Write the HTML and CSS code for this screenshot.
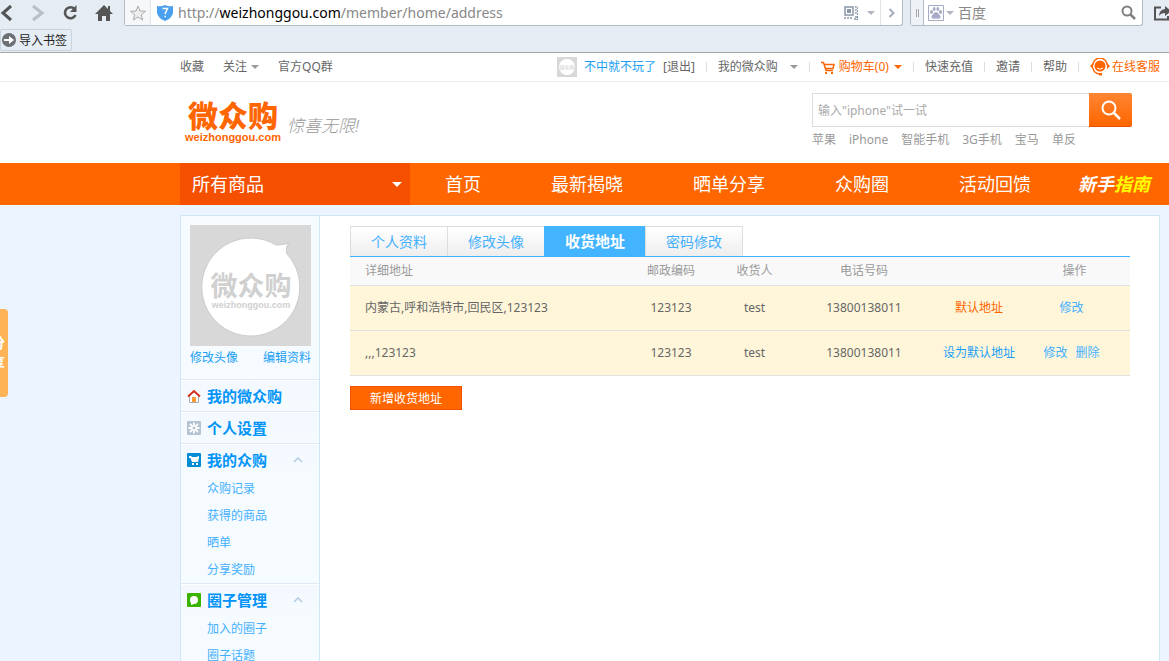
FILE: index.html
```html
<!DOCTYPE html>
<html lang="zh-CN">
<head>
    <meta charset="UTF-8">
    <meta name="viewport" content="width=device-width, initial-scale=1.0">
    <title>收货地址 - 微众购</title>
    <link rel="stylesheet" href="styles.css">
</head>
<body>
    <!-- Browser bar -->
    <div class="browser">
        <div class="browser-row">
            <div class="browser-buttons">
                <button aria-label="后退"><svg width="14" height="18" viewBox="0 0 14 18"><path d="M11 2L3 9l8 7" fill="none" stroke="#555" stroke-width="3"/></svg></button>
                <button aria-label="前进"><svg width="14" height="18" viewBox="0 0 14 18"><path d="M2 2l9 7-9 7" fill="none" stroke="#b9bfc6" stroke-width="3"/></svg></button>
                <button aria-label="刷新"><svg width="16" height="18" viewBox="0 0 16 18"><path d="M12.500 5A5.500 5.500 0 1 0 13.500 11" fill="none" stroke="#555" stroke-width="2.600"/><path d="M14.500 1v7H8z" fill="#555"/></svg></button>
                <button aria-label="主页"><svg width="18" height="18" viewBox="0 0 18 18"><path d="M9 1L0 10h3v7h4v-5h4v5h4v-7h3l-3-3V2h-2v3z" fill="#555"/></svg></button>
            </div>
            <div class="address">
                <button class="star" aria-label="收藏"><svg width="16" height="16" viewBox="0 0 16 16"><path d="M8 1l2 5 5.500.300-4.200 3.500 1.400 5.200L8 12l-4.700 3 1.400-5.200L.5 6.300 6 6z" fill="#eee" stroke="#aaa"/></svg></button>
                <svg class="shield" width="16" height="16" viewBox="0 0 16 16"><path d="M0 1q4 1 8-1 4 2 8 1v7q-1 5-8 8-7-3-8-8z" fill="#4a9fee"/><path d="M5.500 3.500h5l-2.500 5.500M7.500 11.500h1.500" fill="none" stroke="#fff" stroke-width="1.500"/></svg>
                <div class="url">http://<b>weizhonggou.com</b>/member/home/address</div>
                <svg class="qr" width="14" height="14" viewBox="0 0 14 14"><path d="M1 1h8v8H1z" fill="none" stroke="#8b98a8" stroke-width="1.500"/><path d="M3 3h4v4H3z" fill="#8b98a8"/><path d="M12 0v9M0 12h9M13.500 1v13M11 11h3v3h-3z" fill="none" stroke="#8b98a8" stroke-width="1.500" stroke-dasharray="2 1"/></svg>
                <span class="caret caret-browser"></span>
                <button class="go" aria-label="转到"><svg width="8" height="10" viewBox="0 0 8 10"><path d="M1.500 1l4 4-4 4" fill="none" stroke="#a4abbd" stroke-width="2"/></svg></button>
            </div>
            <div class="engine">
                <span class="grip"></span>
                <svg width="16" height="16" viewBox="0 0 16 16"><path d="M.5.5h15v15H.5z" fill="none" stroke="#a6abc8"/><g fill="#a6abc8"><ellipse cx="3.500" cy="7" rx="1.500" ry="2"/><ellipse cx="6.200" cy="4" rx="1.400" ry="2"/><ellipse cx="9.800" cy="4" rx="1.400" ry="2"/><ellipse cx="12.500" cy="7" rx="1.500" ry="2"/><path d="M8 7q2 0 3 2.500 2 1 1.500 3-1 2-4.500 1-3.500 1-4.500-1-.5-2 1.500-3Q6 7 8 7z"/></g></svg>
                <span class="caret caret-browser"></span>
                <input type="text" placeholder="百度" aria-label="百度搜索">
                <svg width="15" height="15" viewBox="0 0 15 15"><circle cx="6" cy="6" r="4.500" fill="none" stroke="#808080" stroke-width="2"/><path d="M9 9l5 5" stroke="#808080" stroke-width="2.500"/></svg>
            </div>
            <button class="share-page" aria-label="分享页面"><svg width="17" height="16" viewBox="0 0 17 16"><path d="M7 2.500H1v12h13V11" fill="none" stroke="#555" stroke-width="2"/><path d="M5 11q0-6 6-7V1l6 5-6 5V8q-4 0-6 3z" fill="#555"/></svg></button>
        </div>
        <button class="bookmark">
            <svg width="14" height="14" viewBox="0 0 14 14"><circle cx="7" cy="7" r="7" fill="#6c7075"/><path d="M2 6h5V3l5 4-5 4V8H2z" fill="#fff"/></svg>
            导入书签
        </button>
    </div>

    <!-- Top links -->
    <div class="topbar">
        <div class="wrap topbar-inner">
            <div class="top-left">
                <a href="#">收藏</a>
                <a href="#">关注<span class="caret"></span></a>
                <a href="#">官方QQ群</a>
            </div>
            <div class="top-right">
                <div class="user">
                    <span class="mini-avatar"><i>微众购</i></span>
                    <a class="blue" href="#">不中就不玩了</a>
                    <a href="#">[退出]</a>
                </div>
                <a class="top-item mine" href="#">我的微众购<span class="caret"></span></a>
                <a class="top-item cart" href="#"><svg width="14" height="13" viewBox="0 0 14 13"><path d="M0 1.500h2.500L5 9.500h7M3 3.500h10L12 7.500H4" fill="none" stroke="#f60" stroke-width="1.500"/><path d="M4 11h2v2H4zM10 11h2v2h-2z" fill="#f60"/></svg>购物车(0)<span class="caret"></span></a>
                <a class="top-item" href="#">快速充值</a>
                <a class="top-item" href="#">邀请</a>
                <a class="top-item" href="#">帮助</a>
                <a class="top-item service" href="#"><svg width="20" height="18" viewBox="0 0 20 18"><circle cx="10" cy="8" r="5.500" fill="#f60"/><path d="M3 7a7 7 0 0 1 14 0M3 10a7.500 6.500 0 0 0 7 6" fill="none" stroke="#f60" stroke-width="1.500"/><path d="M3 5v6L0 8zM17 5v6l3-3z" fill="#f60"/><path d="M9 15h3v2.500H9z" fill="#f60"/><path d="M7 10q3 2.500 6 0" fill="none" stroke="#fff"/></svg>在线客服</a>
            </div>
        </div>
    </div>

    <!-- Logo and search -->
    <div class="header">
        <div class="wrap header-inner">
            <a class="logo" href="#">
                <span class="logo-name">微众购</span>
                <span class="logo-domain">weizhonggou.com</span>
            </a>
            <span class="slogan">惊喜无限!</span>
            <div class="search">
                <form class="search-form">
                    <input type="text" placeholder='输入"iphone"试一试' aria-label="搜索商品">
                    <button type="button" aria-label="搜索"><svg width="22" height="22" viewBox="0 0 22 22"><circle cx="9" cy="9" r="6.500" fill="none" stroke="#fff" stroke-width="2"/><path d="M14 14l6 6" stroke="#fff" stroke-width="2.500"/></svg></button>
                </form>
                <div class="hot-words">
                    <a href="#">苹果</a>
                    <a href="#">iPhone</a>
                    <a href="#">智能手机</a>
                    <a href="#">3G手机</a>
                    <a href="#">宝马</a>
                    <a href="#">单反</a>
                </div>
            </div>
        </div>
    </div>

    <!-- Navigation -->
    <div class="nav">
        <div class="wrap nav-inner">
            <a class="all-goods" href="#">所有商品<span class="caret caret-white"></span></a>
            <a class="nav-link" href="#">首页</a>
            <a class="nav-link" href="#">最新揭晓</a>
            <a class="nav-link" href="#">晒单分享</a>
            <a class="nav-link" href="#">众购圈</a>
            <a class="nav-link" href="#">活动回馈</a>
            <a class="guide" href="#">新手<span>指南</span></a>
        </div>
    </div>

    <div class="wrap member">
        <!-- Sidebar -->
        <div class="sidebar">
            <div class="profile">
                <svg class="avatar" viewBox="0 0 121 121"><path d="M0 0h121v121H0z" fill="#d8d8d8"/><path d="M86 20q8 0 13-2-4 4-2 11a49 49 0 1 1-11-9z" fill="#fff" stroke="#ccc"/><text class="avatar-name" x="61" y="71" text-anchor="middle">微众购</text><text class="avatar-domain" x="61" y="83" text-anchor="middle">weizhonggou.com</text></svg>
                <div class="profile-links">
                    <a href="#">修改头像</a>
                    <a href="#">编辑资料</a>
                </div>
            </div>
            <div class="menu-group">
                <a class="menu-title" href="#"><svg width="14" height="14" viewBox="0 0 14 14"><path d="M2.500 7v6.500h9V7L7 3z" fill="#fff" stroke="#aaa"/><path d="M1 7.500L7 2l6 5.500" fill="none" stroke="#d9301a" stroke-width="1.800"/><path d="M5 8h4v5H5z" fill="#f93"/></svg>我的微众购</a>
            </div>
            <div class="menu-group">
                <a class="menu-title" href="#"><svg width="14" height="14" viewBox="0 0 14 14"><rect width="14" height="14" rx="1" fill="#b4c3d1"/><path d="M7 1.500v11M1.500 7h11M3 3l8 8M11 3l-8 8" stroke="#fff" stroke-width="1.800"/><circle cx="7" cy="7" r="1.500" fill="#b4c3d1"/></svg>个人设置</a>
            </div>
            <div class="menu-group">
                <a class="menu-title" href="#"><svg width="14" height="14" viewBox="0 0 14 14"><rect width="14" height="14" rx="1" fill="#008cd6"/><path d="M2 3h2l1 1h4l3-1v2l-1 4H5L3.500 5H2zM5 10h2v2H5zM9 10h2v2H9z" fill="#fff"/></svg>我的众购<svg class="fold" width="10" height="6" viewBox="0 0 10 6"><path d="M1 5l4-4 4 4" fill="none" stroke="#b5cbe0" stroke-width="1.500"/></svg></a>
                <a class="menu-item" href="#">众购记录</a>
                <a class="menu-item" href="#">获得的商品</a>
                <a class="menu-item" href="#">晒单</a>
                <a class="menu-item" href="#">分享奖励</a>
            </div>
            <div class="menu-group">
                <a class="menu-title" href="#"><svg width="14" height="14" viewBox="0 0 14 14"><rect width="14" height="14" rx="1" fill="#3bb300"/><path d="M7 3q4 0 4 4t-4 4l-3 1v-2Q3 9 3 7q0-4 4-4z" fill="#fff"/></svg>圈子管理<svg class="fold" width="10" height="6" viewBox="0 0 10 6"><path d="M1 5l4-4 4 4" fill="none" stroke="#b5cbe0" stroke-width="1.500"/></svg></a>
                <a class="menu-item" href="#">加入的圈子</a>
                <a class="menu-item" href="#">圈子话题</a>
            </div>
        </div>

        <!-- Address list -->
        <div class="content">
            <div class="tabs">
                <a href="#">个人资料</a>
                <a href="#">修改头像</a>
                <a class="active" href="#">收货地址</a>
                <a href="#">密码修改</a>
            </div>
            <table>
                <thead>
                    <tr>
                        <th class="col-address">详细地址</th>
                        <th class="col-zip">邮政编码</th>
                        <th class="col-name">收货人</th>
                        <th class="col-phone">电话号码</th>
                        <th class="col-default"></th>
                        <th class="col-action">操作</th>
                    </tr>
                </thead>
                <tbody>
                    <tr>
                        <td class="col-address">内蒙古,呼和浩特市,回民区,123123</td>
                        <td>123123</td>
                        <td>test</td>
                        <td>13800138011</td>
                        <td class="is-default">默认地址</td>
                        <td class="actions"><a href="#">修改</a></td>
                    </tr>
                    <tr>
                        <td class="col-address">,,,123123</td>
                        <td>123123</td>
                        <td>test</td>
                        <td>13800138011</td>
                        <td><a class="set-default" href="#">设为默认地址</a></td>
                        <td class="actions"><a href="#">修改</a><a href="#">删除</a></td>
                    </tr>
                </tbody>
            </table>
            <button class="add-address">新增收货地址</button>
        </div>
    </div>

    <button class="share-tab">分<br>享</button>
</body>
</html>
```

FILE: styles.css
```css
* {
    box-sizing: border-box;
}

html {
    scrollbar-width: none;
}

body {
    margin: 0;
    background: #ebf4ff;
    color: #666;
    font-family: "Noto Sans", "Noto Sans CJK SC", sans-serif;
    font-size: 12px;
    line-height: 20px;
    overflow-x: hidden;
}

a {
    color: inherit;
    text-decoration: none;
    white-space: nowrap;
}

button {
    padding: 0;
    border: none;
    background: none;
    font-family: inherit;
    cursor: pointer;
}

input {
    min-width: 0;
    border: none;
    outline: none;
    background: none;
    font-family: inherit;
}

svg {
    display: block;
    flex: none;
}

.wrap {
    margin: 0 9px 0 180px;
}

.caret {
    display: inline-block;
    flex: none;
    border: 4px solid transparent;
    border-top-color: #999;
    border-bottom: none;
}

.caret-white {
    border-width: 5px;
    border-bottom: none;
    border-top-color: #fff;
}

.caret-browser {
    border-top-color: #b0b5c0;
}

/* Browser bar */
.browser {
    height: 53px;
    background: #e5ecf4;
    border-bottom: 1px solid #a6a6a6;
    overflow: hidden;
}

.browser-row {
    display: flex;
    height: 26px;
}

.browser-buttons {
    display: flex;
    align-items: center;
    justify-content: space-between;
    width: 124px;
    padding-right: 11px;
}

.address,
.engine {
    display: flex;
    align-items: center;
    background: #fff;
    border: 1px solid #b3bbc5;
    border-top: none;
    border-radius: 0 0 3px 3px;
}

.address {
    flex: 1;
}

.star {
    display: flex;
    align-items: center;
    justify-content: center;
    width: 26px;
    height: 25px;
    background: #f6f7f8;
    border-right: 1px solid #e0e3e8;
}

.shield {
    margin: 0 5px 0 6px;
}

.url {
    flex: 1;
    color: #888;
    font-size: 14px;
}

.url b {
    color: #000;
    font-weight: normal;
}

.qr {
    margin-right: 9px;
}

.go {
    display: flex;
    align-items: center;
    justify-content: center;
    width: 22px;
    height: 25px;
    margin-left: 5px;
    border-left: 1px solid #e0e3e8;
}

.engine {
    width: 233px;
    margin-left: 7px;
    padding-right: 6px;
}

.engine input {
    flex: 1;
    padding: 0 4px;
    font-size: 14px;
}

.engine input::placeholder {
    color: #888;
}

.engine .caret {
    margin-left: 2px;
}

.grip {
    width: 13px;
    height: 25px;
    margin-right: 4px;
    background: linear-gradient(#aaa, #aaa) 5px 9px / 1px 8px no-repeat, linear-gradient(#aaa, #aaa) 7px 9px / 1px 8px no-repeat, #eef2f7;
    border-right: 1px solid #b3bbc5;
}

.share-page {
    width: 26px;
    padding-left: 11px;
    overflow: hidden;
}

.bookmark {
    display: flex;
    align-items: center;
    gap: 3px;
    height: 22px;
    margin-top: 3px;
    padding: 0 4px 0 1px;
    border: 1px solid #c9d3de;
    border-radius: 2px;
    color: #222;
    font-size: 12px;
}

/* Top links */
.topbar {
    height: 29px;
    background: #fff;
    border-bottom: 1px solid #eee;
}

.topbar-inner,
.top-left,
.top-right,
.user,
.top-item {
    display: flex;
    align-items: center;
}

.topbar-inner {
    justify-content: space-between;
    height: 28px;
}

.top-left {
    gap: 19px;
}

.top-left .caret {
    margin: 0 0 2px 4px;
}

.user {
    gap: 7px;
    padding-right: 11px;
}

.mini-avatar {
    display: flex;
    align-items: center;
    justify-content: center;
    width: 20px;
    height: 20px;
    background: #d8d8d8;
}

.mini-avatar i {
    width: 16px;
    height: 16px;
    background: #fff;
    border-radius: 50%;
    color: #ccc;
    font-size: 5px;
    font-style: normal;
    line-height: 16px;
    text-align: center;
}

.blue {
    color: #1a9ff5;
}

.top-item {
    padding: 0 11px 0 12px;
    background: linear-gradient(#ddd, #ddd) 0 center / 1px 10px no-repeat;
}

.mine .caret {
    margin-left: 12px;
}

.cart,
.service {
    color: #f60;
}

.cart svg {
    margin-right: 4px;
}

.cart .caret {
    margin-left: 5px;
    border-top-color: #f60;
}

.service {
    padding-right: 0;
}

.service svg {
    margin-right: 2px;
}

/* Logo and search */
.header {
    height: 81px;
    background: #fff;
}

.header-inner {
    display: flex;
    padding-left: 4px;
}

.logo {
    display: flex;
    flex-direction: column;
    align-items: center;
    width: 98px;
    padding-top: 19px;
    color: #f60;
    font-weight: bold;
}

.logo-name {
    font-size: 30px;
    font-weight: 900;
    line-height: 30px;
}

.logo-domain {
    font-family: "Liberation Sans", sans-serif;
    font-size: 11px;
    line-height: 12px;
}

.slogan {
    margin: 34px auto 0 5px;
    color: #999;
    font-size: 17px;
    font-style: italic;
    font-weight: 300;
}

.search {
    width: 320px;
    margin: 11px 28px 0 0;
}

.search-form {
    display: flex;
    height: 34px;
}

.search-form input {
    flex: 1;
    padding: 0 5px;
    border: 1px solid #ddd;
    border-right: none;
    font-size: 12px;
}

.search-form input::placeholder {
    color: #aaa;
}

.search-form button {
    display: flex;
    align-items: center;
    justify-content: center;
    width: 43px;
    background: linear-gradient(#ff8533, #f60);
    border-bottom: 1px solid #e65200;
    border-radius: 0 2px 2px 0;
}

.hot-words {
    display: flex;
    gap: 13px;
    margin-top: 3px;
    color: #999;
}

/* Navigation */
.nav {
    background: #f60;
    color: #fff;
    font-size: 18px;
    line-height: 42px;
}

.nav-inner {
    display: flex;
    height: 42px;
}

.all-goods {
    display: flex;
    align-items: center;
    justify-content: space-between;
    width: 230px;
    padding: 0 8px 0 12px;
    background: #f55000;
}

.nav-link {
    padding: 0 35px;
}

.guide {
    margin-left: 12px;
    font-style: italic;
    font-weight: bold;
}

.guide span {
    color: #ff0;
}

/* Member area */
.member {
    display: flex;
    margin-top: 10px;
    border: 1px solid #cfe8f5;
    border-bottom: none;
    background: #fff;
}

.sidebar {
    width: 139px;
    background: #f6fbff;
    border-right: 1px solid #cfe8f5;
}

.profile {
    height: 163px;
    padding: 9px 8px 0 9px;
}

.avatar {
    width: 121px;
    height: 121px;
}

.avatar-name {
    fill: #d0d0d0;
    font-size: 27px;
    font-weight: bold;
}

.avatar-domain {
    fill: #d0d0d0;
    font-family: "Liberation Sans", sans-serif;
    font-size: 9px;
    font-weight: bold;
}

.profile-links {
    display: flex;
    justify-content: space-between;
    padding-top: 2px;
    color: #1a9ff5;
}

.menu-group {
    border-top: 1px solid #dfeaf4;
}

.menu-title {
    display: flex;
    align-items: center;
    gap: 6px;
    height: 31px;
    padding: 0 16px 0 6px;
    background: linear-gradient(#f3f8ff, #f6fbff);
    border-top: 1px solid #fff;
    color: #0194f8;
    font-size: 15px;
    font-weight: bold;
}

.fold {
    margin-left: auto;
}

.menu-item {
    display: block;
    padding-left: 26px;
    color: #43b0ff;
    line-height: 27px;
}

.content {
    flex: 1;
    padding: 10px 29px 0 30px;
}

.tabs {
    display: flex;
    height: 31px;
    border-bottom: 1px solid #43b0ff;
    color: #43b0ff;
    font-size: 14px;
    line-height: 29px;
}

.tabs a {
    width: 97px;
    background: linear-gradient(#fff, #eee);
    border: 1px solid #ddd;
    border-right: none;
    border-bottom: none;
    text-align: center;
}

.tabs a:last-child {
    width: 98px;
    border-right: 1px solid #ddd;
}

.tabs .active {
    width: 101px;
    background: #43b4ff;
    border-color: #43b4ff;
    color: #fff;
    font-size: 15px;
    font-weight: bold;
}

table {
    width: 100%;
    border-collapse: separate;
    border-spacing: 0;
    table-layout: fixed;
}

th,
td {
    padding: 0;
    border-bottom: 1px solid #e0e0e0;
    text-align: center;
}

th {
    height: 29px;
    background: #f9f9f9;
    color: #999;
    font-weight: normal;
}

td {
    height: 45px;
    background: #fff6da;
}

td a {
    color: #43b0ff;
}

td a + a {
    margin-left: 8px;
}

.actions {
    padding-right: 6px;
}

.col-address {
    padding-left: 15px;
    text-align: left;
}

.col-zip {
    width: 98px;
}

.col-name {
    width: 69px;
}

.col-phone {
    width: 150px;
}

.col-default {
    width: 80px;
}

.col-action {
    width: 111px;
}

.is-default {
    color: #f60;
}

td .set-default {
    color: #1a9ff5;
}

.add-address {
    display: block;
    width: 112px;
    height: 24px;
    margin-top: 10px;
    background: #f60;
    border: 1px solid #f55000;
    color: #fff;
    font-size: 12px;
}

/* Share tab that peeks out at the window edge */
.share-tab {
    position: absolute;
    top: 309px;
    left: -12px;
    width: 20px;
    height: 88px;
    background: #ffb357;
    border-radius: 4px;
    color: #fff;
    font-size: 14px;
    font-weight: bold;
    line-height: 20px;
}
```
